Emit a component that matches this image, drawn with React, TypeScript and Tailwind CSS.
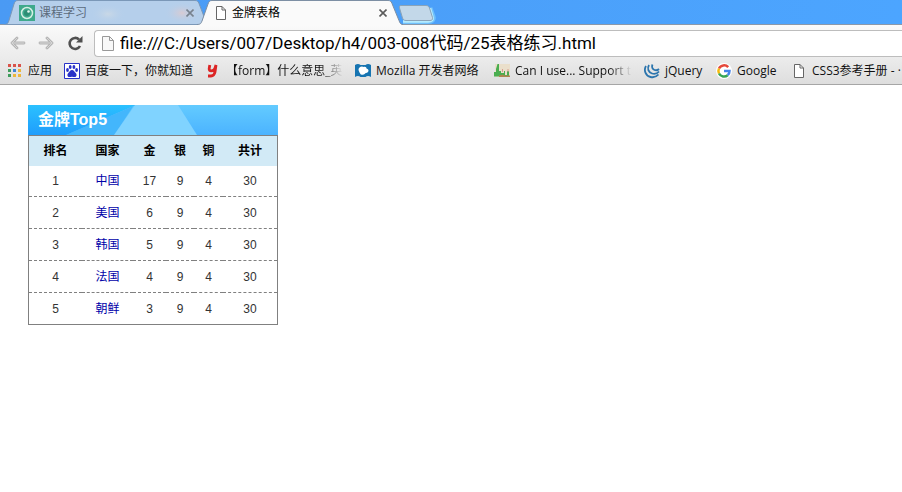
import type { ReactNode } from "react";

const uiFont = "font-['Open_Sans','Noto_Sans_CJK_SC',sans-serif]";
const pageFont = "font-['Liberation_Sans','Noto_Sans_CJK_SC',sans-serif]";

function PageIcon({ className = "" }: { className?: string }) {
  return (
    <svg viewBox="0 0 12 14" className={`h-[14px] w-3 shrink-0 ${className}`} fill="#fff" aria-hidden="true">
      <path d="M1.5.5h5.5l3.5 3.5v9.500h-9z" stroke="#666" />
      <path d="M7 .5v3.500h3.500" stroke="#666" fill="none" />
    </svg>
  );
}

function CloseIcon({ color }: { color: string }) {
  return (
    <svg viewBox="0 0 8 8" className="size-2" aria-hidden="true">
      <path d="M.5.5l7 7M7.500.5L.5 7.500" stroke={color} strokeWidth="1.600" />
    </svg>
  );
}

function TabStrip() {
  return (
    <div className="flex h-[25px] items-stretch border-b border-[#8b98a9] bg-gradient-to-r from-[#4a9af4] to-[#4ca5ff] pl-1">
      <div className="relative isolate flex h-[25px] w-[205px] items-center px-[15px]">
        <svg viewBox="0 0 205 25" className="absolute inset-0 -z-10 h-full w-full" aria-hidden="true">
          <defs>
            <radialGradient id="glow">
              <stop offset="0" stopColor="#d8cbd3" />
              <stop offset="1" stopColor="#b5cfeb" stopOpacity="0" />
            </radialGradient>
            <radialGradient id="pale">
              <stop offset="0" stopColor="#c9d8e6" />
              <stop offset="1" stopColor="#b5cfeb" stopOpacity="0" />
            </radialGradient>
          </defs>
          <path d="M0 24.500c3 0 4-1 5-4L10 4c1-3 2-3.500 4-3.500h177c2 0 3 .5 4 3l5 13-3 8z" fill="#b5cfeb" stroke="#7b98b8" />
          <ellipse cx="104" cy="14" rx="18" ry="10" fill="url(#pale)" />
          <ellipse cx="178" cy="13" rx="18" ry="11" fill="url(#glow)" />
        </svg>
        <svg viewBox="0 0 16 16" className="size-4 shrink-0" aria-hidden="true">
          <path d="M0 0h16v16H0z" fill="#3fa98c" />
          <circle cx="8" cy="8" r="5.500" fill="#3fa98c" stroke="#d5efe5" strokeWidth="1.500" />
          <circle cx="8" cy="8" r="3" fill="#2c8d74" />
          <circle cx="9.500" cy="6.500" r="1.300" fill="#e2f4ee" />
        </svg>
        <span className="ml-1 flex-1 text-xs text-[#5c6b7c]">课程学习</span>
        <button type="button" aria-label="关闭课程学习">
          <CloseIcon color="#77828e" />
        </button>
      </div>
      <div className="relative isolate -ml-3 flex h-[25px] w-[206px] items-center pr-4 pl-[18px]">
        <svg viewBox="0 0 206 25" className="absolute inset-0 -z-10 h-full w-full" aria-hidden="true">
          <path d="M0 25c4-1 4-2 5-4L11 4c1-3 2-3.500 4-3.500h176c2 0 3 .5 4 3l7 17c1 3 2 4 4 4.500z" fill="#fafafa" />
          <path d="M0 24.500c4 0 4-1.500 5-3.500L11 4c1-3 2-3.500 4-3.500h176c2 0 3 .5 4 3l7 17c1 3 2 4 4 4" fill="none" stroke="#7d8fa4" />
        </svg>
        <PageIcon />
        <span className="ml-[5px] flex-1 text-xs text-black">金牌表格</span>
        <button type="button" aria-label="关闭金牌表格">
          <CloseIcon color="#5b5b5b" />
        </button>
      </div>
      <button type="button" aria-label="新标签页" className="-ml-[5px] h-[25px] w-[38px]">
        <svg viewBox="0 0 38 25" className="h-full w-full" aria-hidden="true">
          <path d="M5 21.500h25c4 0 6-2 5-5L32 8" fill="none" stroke="#9be8ff" strokeWidth="5" opacity=".45" />
          <path d="M5 21.500h25c4 0 5.500-2 4.500-4.500L32 8" fill="none" stroke="#c8f6ff" strokeWidth="2.500" opacity=".8" />
          <path d="M3 5.500h25c2 0 3 1 3.500 2.500l3 9.500c.5 2-.5 3-2.500 3H8c-2 0-3-1-3.500-2.500L1.500 8C1 6.500 1.500 5.500 3 5.500z" fill="#c3d8e9" stroke="#8aa3b8" />
        </svg>
      </button>
    </div>
  );
}

function ArrowIcon({ flip = false }: { flip?: boolean }) {
  return (
    <svg viewBox="0 0 16 14" className={flip ? "h-[14px] w-4 -scale-x-100" : "h-[14px] w-4"} aria-hidden="true">
      <g fill="none" strokeLinecap="round" strokeLinejoin="round">
        <path d="M7 2L2 7l5 5M2 7h12" stroke="#b4b4b4" strokeWidth="2.800" />
        <path d="M7 2L2 7l5 5M2 7h12" stroke="#d6d6d6" strokeWidth="1" />
      </g>
    </svg>
  );
}

function Toolbar() {
  return (
    <div className="flex h-8 items-center bg-gradient-to-b from-[#fafafa] to-[#ececec] pt-1 pl-[10px]">
      <button type="button" aria-label="后退"><ArrowIcon /></button>
      <button type="button" aria-label="前进" className="ml-3"><ArrowIcon flip /></button>
      <button type="button" aria-label="重新加载" className="ml-[13px]">
        <svg viewBox="0 0 16 16" className="size-4" aria-hidden="true">
          <path d="M13 11A5.500 5.500 0 1 1 12 4.500" fill="none" stroke="#505050" strokeWidth="2.600" />
          <path d="M15.500 1v6.500H9z" fill="#505050" />
        </svg>
      </button>
      <div className="ml-[11px] flex h-[27px] min-w-0 flex-1 items-center rounded-l-sm border border-r-0 border-[#bdbdbd] bg-white pl-[7px]">
        <svg viewBox="0 0 12 15" className="h-[15px] w-3 shrink-0" aria-hidden="true">
          <path d="M.5.500h7l4 4v10H.500z" fill="#f8f8f8" stroke="#999" />
          <path d="M7.500.500v4h4" fill="none" stroke="#999" />
        </svg>
        <input
          type="text"
          aria-label="地址"
          defaultValue="file:///C:/Users/007/Desktop/h4/003-008代码/25表格练习.html"
          className="ml-[6px] min-w-0 flex-1 bg-transparent font-['Roboto','Noto_Sans_CJK_SC',sans-serif] text-[17px] leading-6 text-black outline-none"
        />
      </div>
    </div>
  );
}

function AppsIcon() {
  const colors = ["#d9534a", "#d9534a", "#d9534a", "#3f9c5b", "#4084d6", "#edb63c", "#3f9c5b", "#edb63c", "#edb63c"];
  return (
    <svg viewBox="0 0 16 16" className="size-4" aria-hidden="true">
      {colors.map((c, i) => (
        <rect key={i} x={1 + (i % 3) * 5} y={1 + Math.floor(i / 3) * 5} width="3" height="3" fill={c} />
      ))}
    </svg>
  );
}

function BaiduIcon() {
  return (
    <svg viewBox="0 0 16 16" className="size-4" aria-hidden="true">
      <path d="M.5.500h15v15H.500z" fill="#fff" stroke="#2932c8" />
      <g fill="#2932c8">
        <ellipse cx="3.500" cy="7" rx="1.400" ry="1.900" />
        <ellipse cx="6.200" cy="4" rx="1.400" ry="2" />
        <ellipse cx="9.900" cy="4" rx="1.400" ry="2" />
        <ellipse cx="12.600" cy="7" rx="1.400" ry="1.900" />
        <path d="M8 7c1.800 0 2.300 1.800 3.700 3 1.400 1.300 1.200 4-1 4-1 0-1.700-.3-2.700-.3s-1.700.3-2.700.3c-2.200 0-2.400-2.700-1-4C5.700 8.800 6.200 7 8 7z" />
      </g>
    </svg>
  );
}

function YoudaoIcon() {
  return (
    <svg viewBox="0 0 16 16" className="size-4" aria-hidden="true">
      <path d="M4.800 2L4.200 5.500q-.3 2.300 2 2.300 3 0 3.700-2.500L11 2 10 9q-.8 4-4 4H3" fill="none" stroke="#dc2525" strokeWidth="2.800" />
    </svg>
  );
}

function MozillaIcon() {
  return (
    <svg viewBox="0 0 16 16" className="size-4" aria-hidden="true">
      <path d="M0 2c2-1.300 4-1.300 5.500 0h5c1.500-1.300 3.500-1.300 5.500 0v12c-2-1.200-4-1.200-5.500 0h-5C4 12.800 2 12.800 0 14z" fill="#1674b1" />
      <path d="M3.500 7c0-3 3-4.500 5.500-3 1.500-.5 2.500.5 2.500 1.500 3 1 2.500 4-.5 4.500-1 0-1.500 2-4 1.800-2 0-1.500-1.600-2.500-2.300z" fill="#fff" />
    </svg>
  );
}

function CanIUseIcon() {
  return (
    <svg viewBox="0 0 16 16" className="size-4" aria-hidden="true">
      <path d="M1 1h15v13H1z" fill="#eadfcb" />
      <path d="M0 13.500V9h2V6l1.500-5L5 1v7h2v2h3V8h1v4h2V8h2v5.500z" fill="#4aae50" />
      <path d="M5 12.500l4-1 1 1h6v1.500H5z" fill="#b08450" />
      <path d="M8.500 6v3M14 6v3" stroke="#d8a090" />
    </svg>
  );
}

function JQueryIcon() {
  return (
    <svg viewBox="0 0 16 16" className="size-4" fill="none" stroke="#2c75ad" strokeWidth="1.800" aria-hidden="true">
      <path d="M2 3C-.5 7 1.500 13 6.500 14c3 .7 6-.3 8-2.500" />
      <path d="M5 2C2.800 5.500 4.500 9.500 8 10.500c3 .8 5.500-.2 7-2" />
      <path d="M8.500 1.500C7.300 4 8.500 6.200 10.500 7c1.800.6 3.500 0 4.500-1" />
    </svg>
  );
}

function GoogleIcon() {
  return (
    <svg viewBox="0 0 16 16" className="size-4" aria-hidden="true">
      <circle cx="8" cy="8" r="8" fill="#fff" />
      <g fill="none" strokeWidth="2.500">
        <path d="M12.200 4.200A5.600 5.600 0 0 0 3 5.500" stroke="#e5483b" />
        <path d="M3 5.500a5.600 5.600 0 0 0 0 5" stroke="#f5b90d" />
        <path d="M3 10.500a5.600 5.600 0 0 0 8.700 1.700" stroke="#37a556" />
        <path d="M11.700 12.200A5.600 5.600 0 0 0 13.500 8H8" stroke="#4383ea" />
      </g>
    </svg>
  );
}

type Bookmark = { label: string; icon: ReactNode; width: string; fade?: boolean };

const bookmarks: Bookmark[] = [
  { label: "应用", icon: <AppsIcon />, width: "w-[45px]" },
  { label: "百度一下，你就知道", icon: <BaiduIcon />, width: "w-[129px]" },
  { label: "【form】什么意思_英", icon: <YoudaoIcon />, width: "w-[138px]", fade: true },
  { label: "Mozilla 开发者网络", icon: <MozillaIcon />, width: "w-[127px]" },
  { label: "Can I use... Support t", icon: <CanIUseIcon />, width: "w-[138px]", fade: true },
  { label: "jQuery", icon: <JQueryIcon />, width: "w-[60px]" },
  { label: "Google", icon: <GoogleIcon />, width: "w-[63px]" },
  { label: "CSS3参考手册 - ·", icon: <PageIcon className="mx-[2px]" />, width: "w-[138px]" },
];

function BookmarkBar() {
  return (
    <nav aria-label="书签" className="flex h-7 items-center gap-3 overflow-hidden border-b border-[#a6a6a6] bg-gradient-to-b from-[#ececec] to-[#dedede] pl-[7px]">
      {bookmarks.map((b) => (
        <a key={b.label} href="#" className={`flex shrink-0 items-center gap-[5px] ${b.width}`}>
          <span className="flex w-4 shrink-0">{b.icon}</span>
          <span
            className={`min-w-0 flex-1 text-xs whitespace-nowrap text-[#111] ${
              b.fade ? "[mask-image:linear-gradient(to_right,#000_80%,transparent)]" : ""
            }`}
          >
            {b.label}
          </span>
        </a>
      ))}
    </nav>
  );
}

const rows = [
  { rank: 1, country: "中国", gold: 17 },
  { rank: 2, country: "美国", gold: 6 },
  { rank: 3, country: "韩国", gold: 5 },
  { rank: 4, country: "法国", gold: 4 },
  { rank: 5, country: "朝鲜", gold: 3 },
];

function MedalTable() {
  return (
    <section className={`w-[250px] ${pageFont}`}>
      <div className="relative isolate flex h-[30px] items-center bg-[#1fabff] pl-[10px]">
        <svg viewBox="0 0 250 30" preserveAspectRatio="none" className="absolute inset-0 -z-10 h-full w-full" aria-hidden="true">
          <defs>
            <linearGradient id="left" x2="0" y2="1">
              <stop offset="0" stopColor="#2bc1ff" />
              <stop offset="1" stopColor="#1f9dfc" />
            </linearGradient>
            <linearGradient id="right" x2="0" y2="1">
              <stop offset="0" stopColor="#63cbff" />
              <stop offset="1" stopColor="#4bb3ff" />
            </linearGradient>
          </defs>
          <path d="M0 0h250v30H0z" fill="url(#left)" />
          <path d="M108 0h142v30H38z" fill="url(#right)" />
          <path d="M108 0L38 30h48L106 0z" fill="#43b6fc" />
          <path d="M107 0h43l19 30H86z" fill="#80d3ff" />
        </svg>
        <h1 className="text-base font-bold text-white">金牌Top5</h1>
      </div>
      <table className="w-full table-fixed border-separate border-spacing-0 border border-[#808080] text-center text-xs text-[#333]">
        <colgroup>
          <col className="w-[53px]" />
          <col className="w-[51px]" />
          <col className="w-[33px]" />
          <col className="w-[28px]" />
          <col className="w-[29px]" />
          <col />
        </colgroup>
        <thead className="bg-[#d2eaf6] text-black">
          <tr className="h-[30px]">
            {["排名", "国家", "金", "银", "铜", "共计"].map((h) => (
              <th key={h} scope="col" className="font-bold">{h}</th>
            ))}
          </tr>
        </thead>
        <tbody className="[&_td]:border-b [&_td]:border-dashed [&_td]:border-[#808080] [&_tr:last-child_td]:border-b-0">
          {rows.map((r, i) => (
            <tr key={r.rank} className={i === 0 || i === rows.length - 1 ? "h-[31px]" : "h-8"}>
              <td>{r.rank}</td>
              <td>
                <a href="#" className="text-[#0000a8]">{r.country}</a>
              </td>
              <td>{r.gold}</td>
              <td>9</td>
              <td>4</td>
              <td>30</td>
            </tr>
          ))}
        </tbody>
      </table>
    </section>
  );
}

export default function App() {
  return (
    <div className={`min-h-screen bg-white ${uiFont}`}>
      <header>
        <TabStrip />
        <Toolbar />
        <BookmarkBar />
      </header>
      <main className="px-7 pt-5">
        <MedalTable />
      </main>
    </div>
  );
}
